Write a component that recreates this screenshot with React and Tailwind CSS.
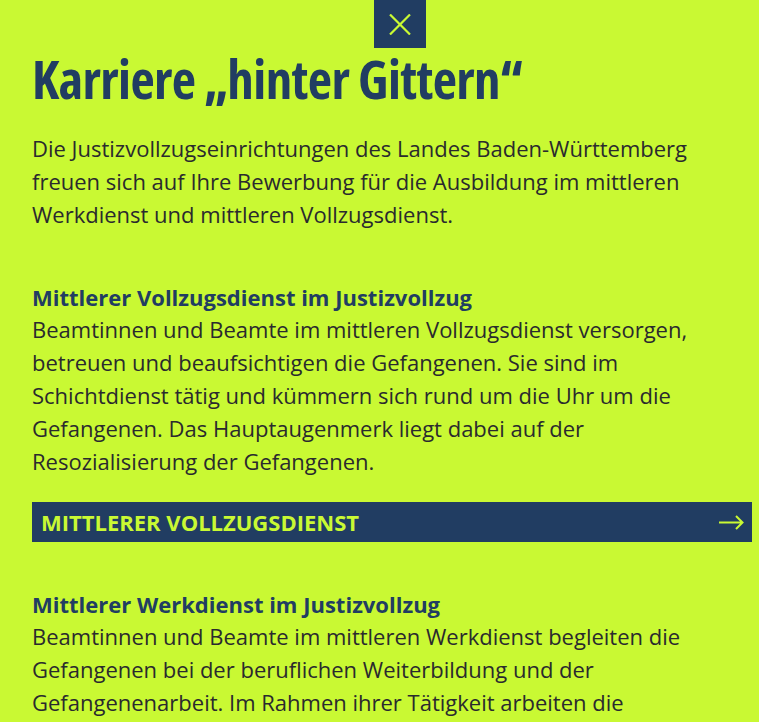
export default function App() {
  return (
    <div className="min-h-screen bg-[#c9f933] font-['Open_Sans',sans-serif] text-[#2a2a2e]">
      <div className="flex">
        <button className="ml-[374px] flex h-12 w-[52px] items-center justify-center bg-[#213d62]">
          <svg width="22" height="21" viewBox="0 0 22 21" fill="none" stroke="#c9f933" strokeWidth="2.2">
            <path d="M1 0.5 L21 20.5 M21 0.5 L1 20.5" />
          </svg>
        </button>
      </div>
      <div className="pl-8 pr-[7px]">
        <h1 className="text-[53px] font-bold leading-[62px] tracking-[-0.6px] text-[#213d62] font-stretch-condensed">
          Karriere „hinter Gittern“
        </h1>
        <p className="mt-[22px] text-[22px] leading-[33px]">
          Die Justizvollzugseinrichtungen des Landes Baden-Württemberg freuen sich auf Ihre Bewerbung für die
          Ausbildung im mittleren Werkdienst und mittleren Vollzugsdienst.
        </p>

        <h2 className="mt-[50px] text-[22px] font-bold leading-[32px] text-[#213d62]">
          Mittlerer Vollzugsdienst im Justizvollzug
        </h2>
        <p className="text-[22px] leading-[33px]">
          Beamtinnen und Beamte im mittleren Vollzugsdienst versorgen, betreuen und beaufsichtigen die Gefangenen. Sie
          sind im Schichtdienst tätig und kümmern sich rund um die Uhr um die Gefangenen. Das Hauptaugenmerk liegt dabei
          auf der Resozialisierung der Gefangenen.
        </p>
        <a className="mt-[24px] flex h-10 items-center justify-between bg-[#213d62] pl-[9px] pr-2 text-[22px] font-bold uppercase text-[#c9f933]">
          <span>Mittlerer Vollzugsdienst</span>
          <svg width="25" height="15" viewBox="0 0 25 15" fill="none" stroke="#c9f933" strokeWidth="2">
            <path d="M0 7.5 H23.5 M17 1 L23.5 7.5 L17 14" />
          </svg>
        </a>

        <h2 className="mt-[46px] text-[22px] font-bold leading-[32px] text-[#213d62]">
          Mittlerer Werkdienst im Justizvollzug
        </h2>
        <p className="text-[22px] leading-[33px]">
          Beamtinnen und Beamte im mittleren Werkdienst begleiten die Gefangenen bei der beruflichen Weiterbildung und
          der Gefangenenarbeit. Im Rahmen ihrer Tätigkeit arbeiten die Gefangenen in den Werkstätten und Betrieben der
          Justizvollzugsanstalten.
        </p>
      </div>
    </div>
  );
}
